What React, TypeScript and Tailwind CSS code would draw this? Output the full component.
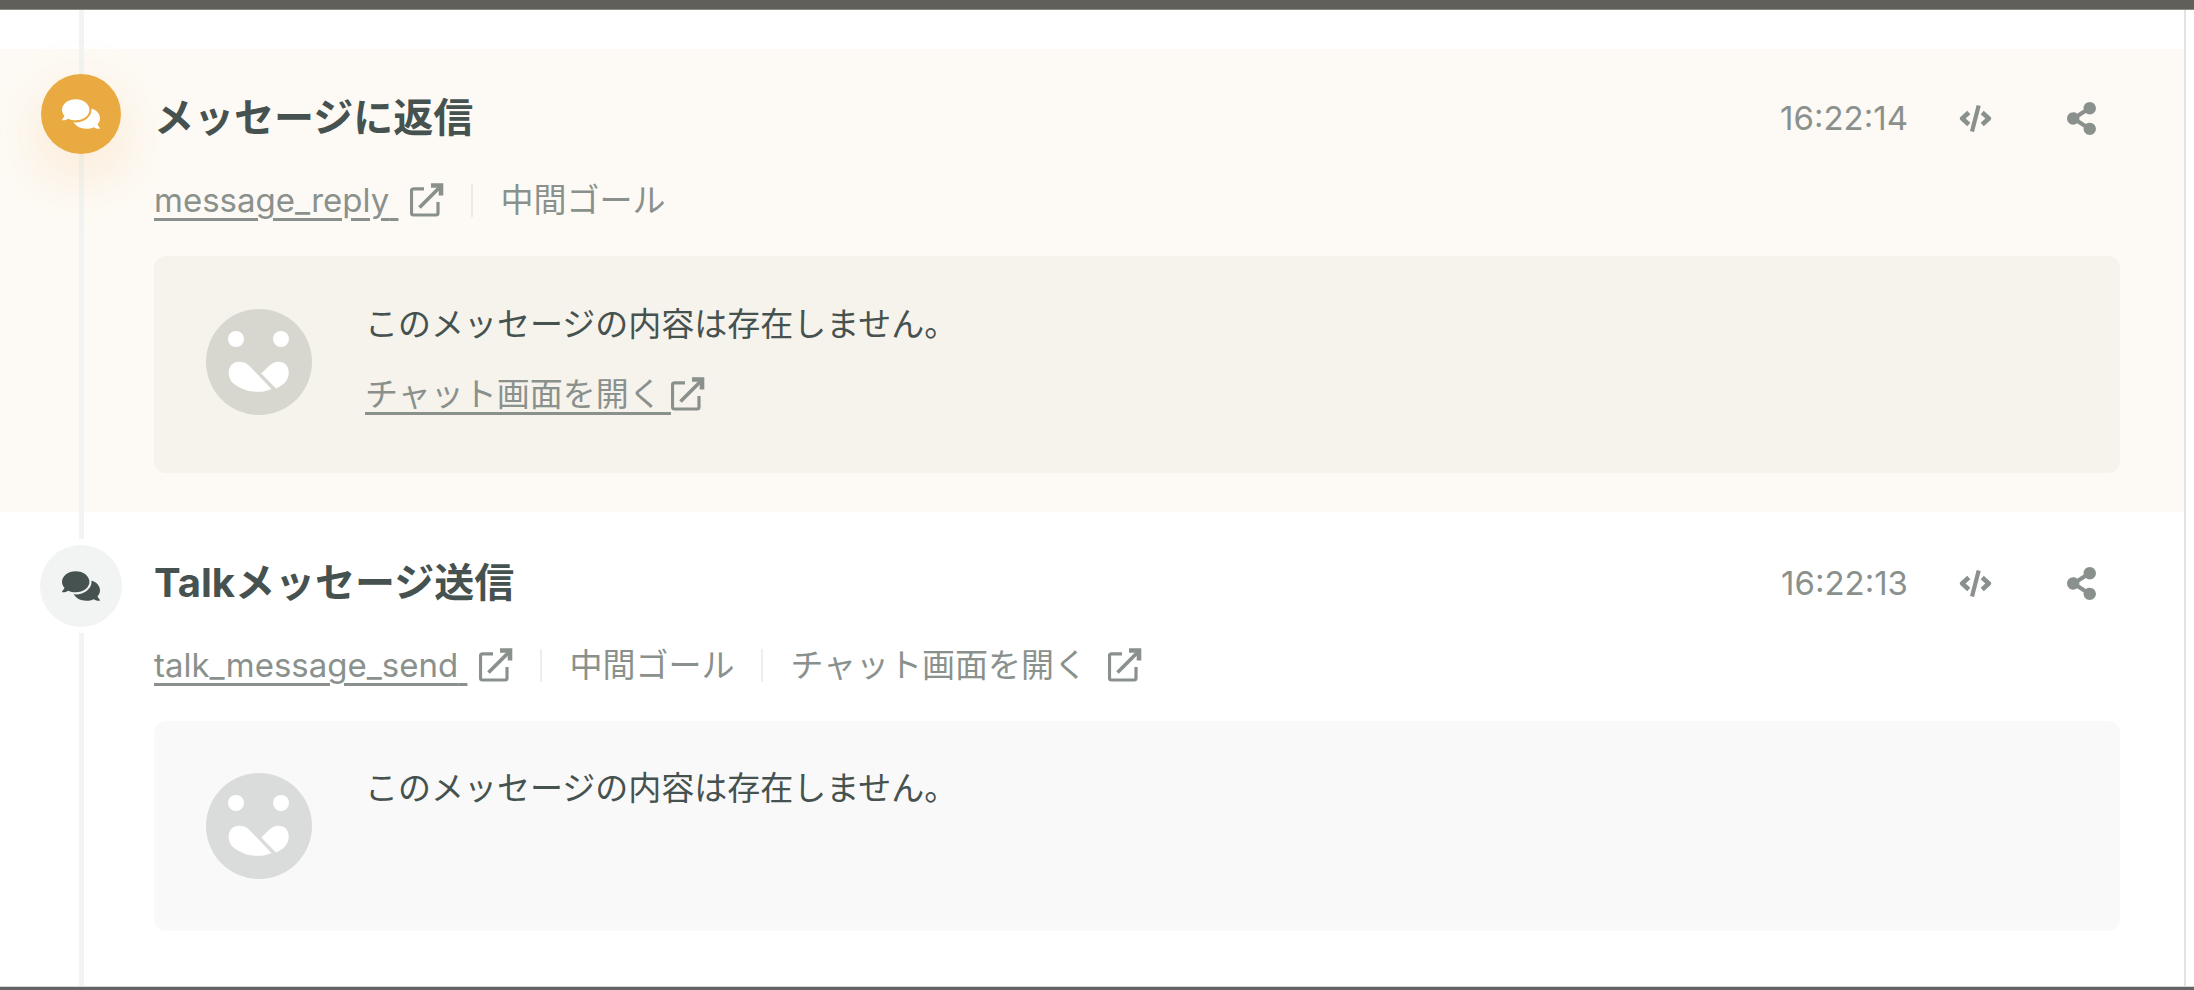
import React from 'react';
import clsx from 'clsx';
import { FaComments, FaShareAlt } from 'react-icons/fa';

interface TimelineEvent {
  id: string;
  title: string;
  name: string;
  time: string;
  tags: string[];
  highlighted: boolean;
  chatLink: 'meta' | 'body';
}

const EVENTS: TimelineEvent[] = [
  {
    id: 'reply',
    title: 'メッセージに返信',
    name: 'message_reply',
    time: '16:22:14',
    tags: ['中間ゴール'],
    highlighted: true,
    chatLink: 'body',
  },
  {
    id: 'send',
    title: 'Talkメッセージ送信',
    name: 'talk_message_send',
    time: '16:22:13',
    tags: ['中間ゴール'],
    highlighted: false,
    chatLink: 'meta',
  },
];

function ExternalIcon() {
  return (
    <svg viewBox="0 0 34 34" className="size-[34px] shrink-0" fill="none" stroke="currentColor" aria-hidden="true">
      <path d="M14 5.8H3.5a2 2 0 0 0-2 2V30a2 2 0 0 0 2 2H26a2 2 0 0 0 2-2V19" strokeWidth="3.2" />
      <path d="M21 2.500H31V12.500" strokeWidth="4.6" />
      <path d="M9.500 24.500L30.500 3.500" strokeWidth="3.800" />
    </svg>
  );
}

function CodeIcon() {
  return (
    <svg viewBox="0 0 33 27" className="h-[27px] w-[33px]" fill="none" stroke="currentColor" strokeWidth="4.6" aria-hidden="true">
      <path d="M9.800 7.500L3.200 13.500L9.800 19.500" strokeLinejoin="round" />
      <path d="M23.200 7.500L29.800 13.500L23.200 19.500" strokeLinejoin="round" />
      <path d="M19.700 .5L13 26.500" strokeWidth="4.2" />
    </svg>
  );
}

function SmileAvatar() {
  return (
    <svg viewBox="0 0 106 106" className="size-[106px] shrink-0" aria-hidden="true">
      <circle cx="53" cy="53" r="53" fill="#445048" fillOpacity="0.17" />
      <g fill="#fff">
        <circle cx="30" cy="30" r="8" />
        <circle cx="75" cy="30" r="8" />
        <path d="M33 52.700C37 52.700 40 53.500 43 56.500L65.500 80C61 82 57 82.800 52 82.800C46 82.800 41 82 36 79.500C27 75.500 22.700 71 22.700 64C22.700 57 27 52.700 33 52.700Z" />
        <path d="M55.300 64.500L63.500 56.500C66 54 69 52.700 72.500 52.700C79 52.700 82.700 57 82.700 63.500C82.700 71 78 76 70 79.500Z" />
      </g>
    </svg>
  );
}

function Separator() {
  return <span className="mx-[27px] h-[33px] w-0.5 bg-[#525d53]/10" />;
}

function EventMarker({ highlighted }: { highlighted: boolean }) {
  return (
    <div
      className={clsx(
        'relative z-10 flex w-[154px] shrink-0 items-start',
        highlighted ? 'pt-[25px] pl-[41px]' : 'pt-[33px] pl-10',
      )}
    >
      <div
        className={clsx(
          'flex items-center justify-center rounded-full text-[38px]',
          highlighted
            ? 'size-20 bg-[#e9ab41] text-white shadow-[0_20px_60px_rgba(245,170,80,0.24)]'
            : 'size-[82px] bg-[#f2f4f4] text-[#46524f] ring-6 ring-white',
        )}
      >
        <FaComments />
      </div>
    </div>
  );
}

function EventRow({ event }: { event: TimelineEvent }) {
  const { highlighted } = event;

  return (
    <li className={clsx('flex', highlighted && 'bg-[#fdfaf5]')}>
      <EventMarker highlighted={highlighted} />
      <article className={clsx('min-w-0 flex-1 pr-16', highlighted ? 'pt-[41px] pb-[39px]' : 'pt-[43px] pb-[54px]')}>
        <header className="flex h-14 items-center justify-between">
          <h2 className="text-[40px] leading-[56px] font-bold text-[#46524f]">{event.title}</h2>
          <div className="flex items-center gap-7 text-[33px]">
            <time>{event.time}</time>
            <button type="button" aria-label="コードを表示" className="flex h-14 w-[78px] items-center justify-center">
              <CodeIcon />
            </button>
            <button type="button" aria-label="共有" className="flex h-14 w-[78px] items-center justify-center">
              <FaShareAlt />
            </button>
          </div>
        </header>

        <div className="mt-[30px] flex h-12 items-center">
          <a href="#event" className="flex items-center gap-3">
            <span className="underline decoration-3 underline-offset-6">{event.name}&nbsp;</span>
            <ExternalIcon />
          </a>
          {event.tags.map(tag => (
            <React.Fragment key={tag}>
              <Separator />
              <span>{tag}</span>
            </React.Fragment>
          ))}
          {event.chatLink === 'meta' && (
            <>
              <Separator />
              <a href="#chat" className="flex items-center gap-3">
                <span>チャット画面を開く&nbsp;</span>
                <ExternalIcon />
              </a>
            </>
          )}
        </div>

        <div
          className={clsx(
            'mt-8 flex gap-[53px] rounded-xl pl-[52px]',
            highlighted ? 'bg-[#f6f3ec] pt-[53px] pb-[55px]' : 'bg-[#f9f9f9] py-[52px]',
          )}
        >
          <SmileAvatar />
          <div className="-mt-[9px] flex flex-col items-start gap-[22px]">
            <p className="text-[#46524f]">このメッセージの内容は存在しません。</p>
            {event.chatLink === 'body' && (
              <a href="#chat" className="flex items-center">
                <span className="underline decoration-3 underline-offset-6">チャット画面を開く&nbsp;</span>
                <ExternalIcon />
              </a>
            )}
          </div>
        </div>
      </article>
    </li>
  );
}

export default function App() {
  return (
    <div className="flex min-h-screen flex-col bg-white font-[Inter,'Noto_Sans_CJK_JP',sans-serif] text-[33px] leading-[48px] text-[#8a918d]">
      <div className="h-[10px] border-b border-[#8b8a87] bg-[#605f5a]" />
      <main className="relative mr-2 flex-1 border-r-2 border-[#e2e2e0] pt-[39px]">
        <ol>
          {EVENTS.map(event => (
            <EventRow key={event.id} event={event} />
          ))}
        </ol>
        {/* rail sits over the row tint but under the markers */}
        <div className="absolute inset-y-0 left-[79px] z-0 w-[5px] bg-[#f1f4f3]" />
      </main>
      <div className="h-1 border-t border-[#d5d5d5] bg-[#636463]" />
    </div>
  );
}
